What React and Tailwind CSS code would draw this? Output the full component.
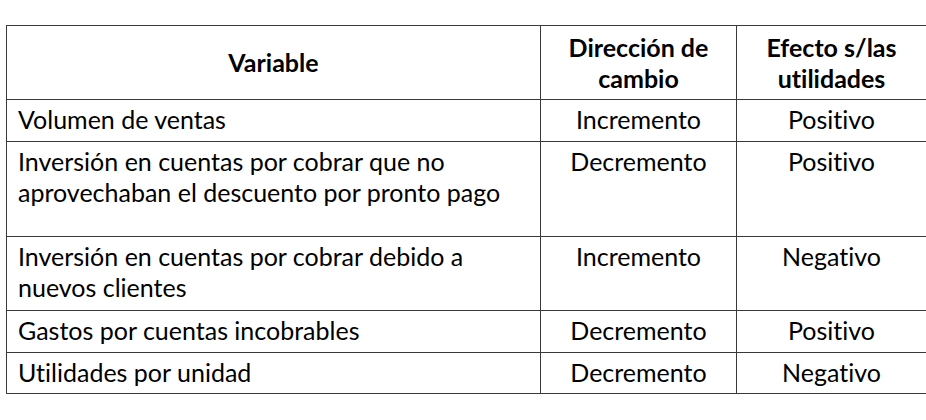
import React from "react";

const rows = [
  { variable: "Volumen de ventas", direccion: "Incremento", efecto: "Positivo", h: "h-[42px]" },
  {
    variable: "Inversión en cuentas por cobrar que no aprovechaban el descuento por pronto pago",
    direccion: "Decremento",
    efecto: "Positivo",
    h: "h-[95px]",
  },
  {
    variable: "Inversión en cuentas por cobrar debido a nuevos clientes",
    direccion: "Incremento",
    efecto: "Negativo",
    h: "h-[74px]",
  },
  { variable: "Gastos por cuentas incobrables", direccion: "Decremento", efecto: "Positivo", h: "h-[42px]" },
  { variable: "Utilidades por unidad", direccion: "Decremento", efecto: "Negativo", h: "h-[41px]" },
];

export default function App() {
  return (
    <div className="w-[926px] h-[420px] bg-white pt-[25px] pl-[6px] font-['Lato',sans-serif] text-black [font-variant-ligatures:none]">
      <table className="w-[920px] table-fixed border-collapse border border-[#3a3a3a] text-[25px] leading-[31px]">
        <colgroup>
          <col className="w-[534px]" />
          <col className="w-[196px]" />
          <col className="w-[190px]" />
        </colgroup>
        <thead>
          <tr className="h-[74px] font-bold">
            <th className="border border-[#3a3a3a] align-middle text-center">Variable</th>
            <th className="border border-[#3a3a3a] align-middle text-center px-2">Dirección de cambio</th>
            <th className="border border-[#3a3a3a] align-middle text-center px-2">Efecto s/las utilidades</th>
          </tr>
        </thead>
        <tbody>
          {rows.map((row, i) => (
            <tr key={i} className={row.h}>
              <td className="border border-[#3a3a3a] align-top pt-[4px] pl-[11px] pr-4">{row.variable}</td>
              <td className="border border-[#3a3a3a] align-top pt-[4px] text-center">{row.direccion}</td>
              <td className="border border-[#3a3a3a] align-top pt-[4px] text-center">{row.efecto}</td>
            </tr>
          ))}
        </tbody>
      </table>
    </div>
  );
}
